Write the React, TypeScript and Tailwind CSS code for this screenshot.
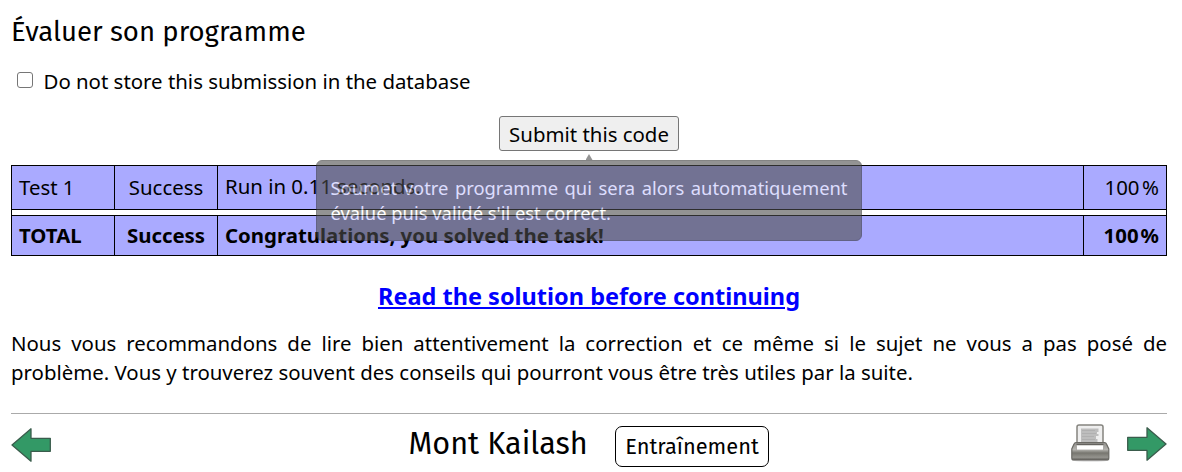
import React from "react";

function Arrow({ flip = false }: { flip?: boolean }) {
  return (
    <svg width="40" height="34" viewBox="0 0 40 34" className={flip ? "-scale-x-100" : ""}>
      <path d="M1 17 L20 0.8 V10.3 H39.3 V23.3 H20 V33.2 Z" fill="#339966" stroke="#3a5c4c" strokeWidth="1.3" strokeLinejoin="round" />
    </svg>
  );
}

function Printer() {
  return (
    <svg width="40" height="38" viewBox="0 0 40 38">
      <defs>
        <linearGradient id="body" x1="0" y1="0" x2="0" y2="1">
          <stop offset="0" stopColor="#8f8e8a" />
          <stop offset="0.4" stopColor="#b5b4b0" />
          <stop offset="0.6" stopColor="#77766f" />
          <stop offset="0.85" stopColor="#94938e" />
          <stop offset="1" stopColor="#5b5a55" />
        </linearGradient>
      </defs>
      <ellipse cx="19.500" cy="36" rx="19" ry="1.6" fill="#d0d0d0" />
      <path d="M6 20 V3 Q6 1 8 1 H30 Q32 1 32 3 V20 Z" fill="#eeeeee" stroke="#85847f" strokeWidth="1.5" />
      <path d="M10 4.500 H27.500 V8 H26 V10 H27.500 V12 H25 V15 H26.500 V19 H10 Z" fill="#bdbdbd" />
      <path d="M11 6.500 H24 M11 9.500 H25 M11 12.500 H23 M11 15.500 H24" stroke="#b0b0b0" strokeWidth="1" />
      <path d="M5 18.500 Q3.500 18.500 3 20 L0.800 25 V34 Q0.800 36 3 36 H35.500 Q37.800 36 37.800 34 V25 L35.500 20 Q35 18.500 33.500 18.500 Z" fill="url(#body)" stroke="#6a6964" strokeWidth="1.2" />
      <path d="M5.500 21 H32.500 V26 H5.500 Z" fill="#ffffff" stroke="#a3a29e" strokeWidth="0.8" />
      <path d="M5.500 20.300 H32.500" stroke="#55544f" strokeWidth="1" />
    </svg>
  );
}

export default function App() {
  return (
    <div className="h-[472px] w-[1182px] overflow-hidden bg-white px-[11px] pr-[15px] font-['Noto_Sans',sans-serif] text-[20.4px] text-black">
      <h2 className="flex h-[64px] items-center font-['Fira_Sans','Noto_Sans',sans-serif] text-[27.54px] leading-none">
        <span className="whitespace-nowrap">Évaluer son programme</span>
      </h2>
      <label className="flex h-[34px] items-center">
        <input type="checkbox" className="mr-[11px] mb-[2px] ml-[5.5px] size-[16px] shrink-0 appearance-none rounded-[3px] border border-[#767676] bg-white" />
        <span className="pt-px whitespace-nowrap">Do not store this submission in the database</span>
      </label>
      <div className="relative mt-[18px] flex justify-center">
        <button className="h-[35px] w-[180px] rounded-[3px] border border-[#767676] bg-[#efefef] pt-[2px] leading-none whitespace-nowrap">Submit this code</button>
        <div className="absolute top-[38px] left-[305px] z-10 w-[546px] opacity-60">
          <div className="mx-auto h-[6px] w-[7px] bg-[#4d4d4d] [clip-path:polygon(50%_0,100%_100%,0_100%)]" />
          <div className="h-[81px] rounded-[6px] border border-[#333] bg-[#4d4d4d] px-[13.5px] pt-[14px] text-justify text-[18.36px] leading-[25px] text-white">
            Soumet votre programme qui sera alors automatiquement évalué puis validé s'il est correct.
          </div>
        </div>
      </div>
      <div className="mt-[14px] h-[91px] border border-black">
        <div className="grid h-[44px] grid-cols-[103px_103px_866px_1fr] border-b border-black bg-[#aaaaff] leading-[43px]">
          <div className="border-r border-black pl-[7px]">Test 1</div>
          <div className="border-r border-black text-center">Success</div>
          <div className="border-r border-black pl-[7px] leading-[41px]">Run in 0.11 seconds.</div>
          <div className="pr-[7px] text-right">100<span className="ml-[2.5px]">%</span></div>
        </div>
        <div className="h-[5px]" />
        <div className="grid h-[40px] grid-cols-[103px_103px_866px_1fr] border-t border-black bg-[#aaaaff] leading-[38px] font-bold">
          <div className="border-r border-black pl-[7px]">TOTAL</div>
          <div className="border-r border-black text-center">Success</div>
          <div className="border-r border-black pl-[7px]">Congratulations, you solved the task!</div>
          <div className="pr-[7px] text-right">100<span className="ml-[2px]">%</span></div>
        </div>
      </div>
      <div className="mt-[23px] text-center text-[23.5px] leading-[35px] font-bold">
        <a href="#" className="text-[#0000ff] underline">Read the solution before continuing</a>
      </div>
      <p className="mt-[15px] text-justify leading-[29px]">
        Nous vous recommandons de lire bien attentivement la correction et ce même si le sujet ne vous a pas posé de problème. Vous y trouverez souvent des conseils qui pourront vous être très utiles par la suite.
      </p>
      <footer className="mt-[26px] flex h-[60px] items-start border-t border-[#aaaaaa] pt-[12px] font-['Fira_Sans','Noto_Sans',sans-serif]">
        <div className="w-[397.5px] pt-[2px]"><Arrow /></div>
        <div className="w-[206.5px] text-[30.6px] leading-[35px] whitespace-nowrap">Mont Kailash</div>
        <div className="flex h-[41px] w-[154px] items-center justify-center rounded-[7px] border border-black pt-px text-[21.8px] whitespace-nowrap">Entraînement</div>
        <div className="ml-auto flex gap-[16px]"><div className="-mt-[2px]"><Printer /></div><div className="pt-[1px]"><Arrow flip /></div></div>
      </footer>
    </div>
  );
}
